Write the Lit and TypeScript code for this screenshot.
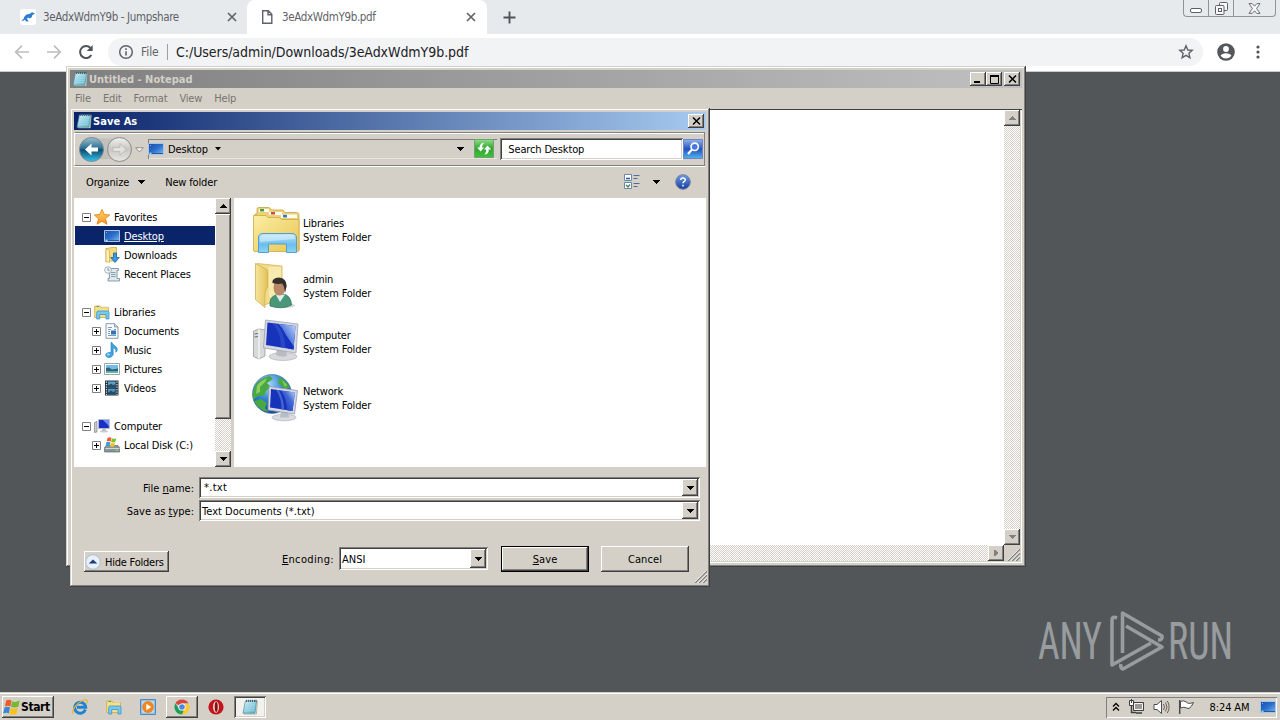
import { LitElement, html, svg, css, nothing, type TemplateResult } from "lit";
import { customElement, property } from "lit/decorators.js";
import { classMap } from "lit/directives/class-map.js";

interface TreeRow {
  label?: string;
  icon?: string;
  level?: number;
  toggle?: "plus" | "minus";
  selected?: boolean;
}

const TREE: TreeRow[] = [
  { label: "Favorites", icon: "star", level: 0, toggle: "minus" },
  { label: "Desktop", icon: "desktop", level: 1, selected: true },
  { label: "Downloads", icon: "downloads", level: 1 },
  { label: "Recent Places", icon: "recent", level: 1 },
  {},
  { label: "Libraries", icon: "libraries", level: 0, toggle: "minus" },
  { label: "Documents", icon: "document", level: 1, toggle: "plus" },
  { label: "Music", icon: "music", level: 1, toggle: "plus" },
  { label: "Pictures", icon: "pictures", level: 1, toggle: "plus" },
  { label: "Videos", icon: "videos", level: 1, toggle: "plus" },
  {},
  { label: "Computer", icon: "computer", level: 0, toggle: "minus" },
  { label: "Local Disk (C:)", icon: "disk", level: 1, toggle: "plus" },
];

const PLACES = [
  { label: "Libraries", icon: "librariesLarge" },
  { label: "admin", icon: "userLarge" },
  { label: "Computer", icon: "computerLarge" },
  { label: "Network", icon: "networkLarge" },
];

interface Icon {
  box: string;
  body: TemplateResult;
}

const ICONS: Record<string, Icon> = {
  notepad: {
    box: "0 0 16 16",
    body: svg`
      <defs><linearGradient id="np" x1="0" y1="0" x2="1" y2="1"><stop offset="0" stop-color="#d9f4f8"/><stop offset="1" stop-color="#52adc9"/></linearGradient></defs>
      <path d="M4 2H15.3L14.4 15H2Z" fill="#f4f6ef" stroke="#8a8a66" stroke-width=".6"/>
      <path d="M3.4 2H14.6L13 14.2H1Z" fill="url(#np)" stroke="#3c8299" stroke-width=".6"/>
      <path d="M4 5.5H13M3.7 7.5H12.7M3.4 9.5H12.5M3.1 11.5H12.2" stroke="#a3dae6" stroke-width=".7"/>
      <path d="M4.5 .8V3M6.5 .8V3M8.5 .8V3M10.5 .8V3M12.5 .8V3M14 .8V3" stroke="#3e5f69" stroke-width=".9"/>`,
  },
  desktop: {
    box: "0 0 16 16",
    body: svg`
      <defs><linearGradient id="dk" x1="0" y1="0" x2="1" y2="1"><stop offset="0" stop-color="#1a4ba5"/><stop offset=".5" stop-color="#2d6fce"/><stop offset="1" stop-color="#7fbbf0"/></linearGradient></defs>
      <path d="M.5 2.5H15.5V13.5H.5Z" fill="url(#dk)" stroke="#a9c6e5"/>
      <path d="M1 12.5H15" stroke="#2a5796" stroke-width="1"/>
      <path d="M2 4.500H3" stroke="#86b9ea"/>
      <path d="M1.5 12.300H3.500" stroke="#8fe6ef" stroke-width="1.400"/>`,
  },
  star: {
    box: "0 0 16 16",
    body: svg`
      <defs><linearGradient id="st" x1="0" y1="0" x2="0" y2="1"><stop offset="0" stop-color="#ffd873"/><stop offset="1" stop-color="#f7941d"/></linearGradient></defs>
      <path d="M8 .5L10.200 5.500 15.700 6 11.500 9.600 12.900 15.200 8 12.200 3.100 15.200 4.500 9.600 .3 6 5.800 5.500Z" fill="url(#st)" stroke="#e58314" stroke-width=".9"/>`,
  },
  downloads: {
    box: "0 0 16 16",
    body: svg`
      <path d="M2 1.5L8 .5H12.5V14H5L2 15Z" fill="#f4db7c" stroke="#c9a13b" stroke-width=".7"/>
      <path d="M2 1.5L5.5 3.5V15.5L2 14.5Z" fill="#fbefb2" stroke="#c9a13b" stroke-width=".6"/>
      <path d="M9.5 6H12.5V10.5H15.3L11 15.5 6.7 10.5H9.5Z" fill="#3b9ae0" stroke="#1a5fa8" stroke-width=".8"/>`,
  },
  recent: {
    box: "0 0 16 16",
    body: svg`
      <path d="M5 2.500H14.5V4.500H13V12.5H15.500V15H4V12.5H5.5Z" fill="#e1e9ee" stroke="#7890a0" stroke-width=".9"/>
      <path d="M7 6.5H11.5M7 8.5H11.5M7 10.5H11.5" stroke="#7d96a8" stroke-width=".9"/>
      <circle cx="4" cy="4" r="3.3" fill="#f2f6f8" stroke="#9aabb6" stroke-width=".9"/>
      <path d="M4 2V4.3H5.5" fill="none" stroke="#5c7485" stroke-width=".8"/>`,
  },
  libraries: {
    box: "0 0 16 16",
    body: svg`
      <path d="M.7 2H6L7 3.500H14.5V13.5H.7Z" fill="#f7df85" stroke="#cfa942" stroke-width=".8"/>
      <path d="M2.5 2.5H5" stroke="#4aab56"/><path d="M8 3H14" stroke="#e3e3d2"/>
      <path d="M2.7 15V8.5Q2.7 7 4.2 7H13.5Q15 7 15 8.5V15H12V10.5H5.7V15Z" fill="#79c8f0" stroke="#3995cd" stroke-width=".8"/>`,
  },
  document: {
    box: "0 0 16 16",
    body: svg`
      <path d="M2 .7H10.5L14 4V15.3H2Z" fill="#fdfefe" stroke="#7690a6" stroke-width=".9"/>
      <path d="M10.5 .7V4H14" fill="#c7d9e8" stroke="#7690a6" stroke-width=".8"/>
      <path d="M4 4.5H8M4 6.5H7M10 6.5H12M4 8.5H6M4 10.5H6M4 12.5H12" stroke="#7e9bb8"/>
      <path d="M7 7.5H12V11.5H7Z" fill="#2f74b8"/>`,
  },
  music: {
    box: "0 0 16 16",
    body: svg`
      <path d="M8 .5C8.5 3.5 13.5 4 13.3 7.500 13.2 9 12.2 10 11.7 10.2 12.5 7.5 11 6.5 9.2 5.8V12C9.2 14 7.2 15.5 4.8 15.5 3 15.5 1.700 14.400 1.700 13 1.700 11.200 4 10 7 10.500V.5Z" fill="#3fa4e3" stroke="#1e78bd" stroke-width=".6"/>
      <ellipse cx="4.3" cy="12.6" rx="1.6" ry="1" fill="#a5daf8"/>`,
  },
  pictures: {
    box: "0 0 16 16",
    body: svg`
      <path d="M.5 2.5H15.5V13.5H.5Z" fill="#fff" stroke="#98a5ac"/>
      <path d="M2 4H14V12H2Z" fill="#72bce8"/>
      <path d="M2 7L5 6.5 8 8.5 14 7.5V12H2Z" fill="#2c6478"/>
      <path d="M2 10.2H14V12H2Z" fill="#69b7ad"/>`,
  },
  videos: {
    box: "0 0 16 16",
    body: svg`
      <path d="M1 .5H14.5V15.5H1Z" fill="#27363e"/>
      <path d="M4 1.5H11.5V7.3H4Z" fill="#5ca2cb"/><path d="M4 8.7H11.5V14.5H4Z" fill="#4f94c4"/>
      <path d="M4 5.5L7 3.5 9 5 11.5 4V7.3H4ZM4 12.5L7 10.5 9 12 11.5 11V14.5H4Z" fill="#244d68"/>
      <path d="M2.5 1.5V15M13 1.5V15" stroke="#d9e5ea" stroke-width="1.2" stroke-dasharray="1.2 1.3"/>`,
  },
  computer: {
    box: "0 0 16 16",
    body: svg`
      <path d="M.5 4.5L3 3.5V14L.5 14.5Z" fill="#c9ccd1" stroke="#7e838b" stroke-width=".7"/>
      <path d="M4.5 1.5H15.3V10.5H4.5Z" fill="#1a2fc8" stroke="#b9bfca" stroke-width=".9"/>
      <path d="M9 2L15 2V8Z" fill="#6e8ff0"/>
      <path d="M8.5 11H11.5L12.5 13.5H7.5Z" fill="#b4b8c2"/><ellipse cx="10" cy="13.6" rx="4" ry="1" fill="#c9cbd1"/>`,
  },
  disk: {
    box: "0 0 16 16",
    body: svg`
      <path d="M.500 10.5L2.500 8.5H14L15.7 11V15H.500Z" fill="#87949a" stroke="#5d6a70" stroke-width=".7"/>
      <path d="M1.3 11.5H15.4" stroke="#cfd8dc"/><path d="M11.5 13.300H14" stroke="#7fe25c" stroke-width="1.1"/>
      <path d="M3.5 1Q5.5 -.2 7.5 .8L6.7 4.500Q4.8 3.6 2.6 4.600Z" fill="#ef5d26"/>
      <path d="M8 1.2Q9.900 2.200 12.200 1.200L11.300 5Q9.200 5.900 7.100 5Z" fill="#7cbf33"/>
      <path d="M2.400 5.300Q4.500 4.300 6.400 5.300L5.500 9.200Q3.700 8.200 1.500 9.200Z" fill="#3f9cdc"/>
      <path d="M6.900 5.700Q9 6.600 11.100 5.700L10.200 9.400Q8.100 10.200 6 9.400Z" fill="#fbc021"/>`,
  },
  librariesLarge: {
    box: "0 0 48 48",
    body: svg`
      <defs>
        <linearGradient id="lf" x1="0" y1="0" x2="1" y2="1"><stop offset="0" stop-color="#fbeea6"/><stop offset="1" stop-color="#e9c550"/></linearGradient>
        <linearGradient id="lb" x1="0" y1="0" x2="0" y2="1"><stop offset="0" stop-color="#bfe6fa"/><stop offset=".6" stop-color="#6bbdec"/><stop offset="1" stop-color="#8ed8f5"/></linearGradient>
      </defs>
      <path d="M5 8V3Q5 1.500 6.5 1.500H17L20 4H31L33 6.5H44Q47 6.500 47 9V44H3V8Z" fill="#ecd37a" stroke="#c8a547" stroke-width=".8"/>
      <path d="M7 3H17V6H7ZM17 6H30V9H17ZM29 8.5H45V12H29Z" fill="#fffef5"/>
      <path d="M8 3H12V5.5H8Z" fill="#4a9b42"/><path d="M19 6H23V8.5H19Z" fill="#cf4c38"/><path d="M31 8.8H35V11.5H31Z" fill="#3a7ab8"/>
      <path d="M1.5 9.500H14L16 11.500H27L30 13.5H47V44Q47 45.5 45.5 45.5H3Q1.5 45.5 1.5 44Z" fill="url(#lf)" stroke="#cda941" stroke-width=".8"/>
      <path d="M6.5 46.5V32Q6.5 27.5 11 27.5H40Q44.5 27.5 44.5 32V46.5H34.5V38H16.5V46.5Z" fill="url(#lb)" stroke="#529fd0" stroke-width="1"/>
      <path d="M8 33Q8 29 12 29H39Q43 29 43 33L8 36Z" fill="#ddf3fd" opacity=".55"/>`,
  },
  userLarge: {
    box: "0 0 48 48",
    body: svg`
      <defs><linearGradient id="uf" x1="0" y1="0" x2="1" y2="0"><stop offset="0" stop-color="#f7e59c"/><stop offset="1" stop-color="#e4c25a"/></linearGradient></defs>
      <path d="M5 1.500L30 4V37L12 43Z" fill="#f1dc8b" stroke="#d6b85b" stroke-width=".8"/>
      <path d="M17 5H29V35H17Z" fill="#faf0bd" opacity=".7"/>
      <path d="M3.5 1.5L14 7Q15.5 8 15.5 9.500V25Q12 28 13 45.5L3.5 37.5Z" fill="url(#uf)" stroke="#d0af50" stroke-width=".8"/>
      <ellipse cx="34" cy="43.5" rx="9" ry="2.5" fill="#d6d6d6"/>
      <path d="M18 44Q17 35 24 33L33 32.5Q39 34.5 39.5 43Q30 48 18 44Z" fill="#489779" stroke="#32745b" stroke-width=".8"/>
      <path d="M24 33L28 40 33 32.5Z" fill="#dcefe6"/>
      <ellipse cx="27.500" cy="25.500" rx="6" ry="8" fill="#b98866"/>
      <path d="M20.5 21Q19.5 16 27 15.5 34.5 16 34.7 24L33 31Q32.500 24 30 21.500Q26 22.5 20.5 21Z" fill="#352f2c"/>`,
  },
  computerLarge: {
    box: "0 0 48 48",
    body: svg`
      <defs><linearGradient id="cs" x1="0" y1="1" x2="1" y2="0"><stop offset="0" stop-color="#1932b5"/><stop offset=".5" stop-color="#1430bf"/><stop offset=".52" stop-color="#547bdd"/><stop offset="1" stop-color="#c1d9fb"/></linearGradient></defs>
      <path d="M1.5 13L7 11 13 12V38L7 41 1.5 38.5Z" fill="#d8d9d9" stroke="#989a9c" stroke-width=".8"/>
      <path d="M7 11L7 41" stroke="#f7f7f7" stroke-width="1.2"/><path d="M2.5 16L6 15.5M2.5 19L6 18.5" stroke="#6b6e73" stroke-width="1.2"/>
      <ellipse cx="31" cy="38.5" rx="14" ry="4" fill="#d7d9dc" stroke="#b3b6ba" stroke-width=".7"/>
      <path d="M25 30L34 32 35 38Q29 40 24 37Z" fill="#b8bbc2"/>
      <path d="M13.500 2L46 6 44 35 11.500 30Z" fill="#d4d7e1" stroke="#9fa4b4" stroke-width=".8"/>
      <path d="M15.5 4.5L43.500 8 41.500 31.5 14 27Z" fill="#1732bb"/>
      <path d="M26 5.800L43.500 8 41.500 31.500 36 30.600Q36 14 26 5.800Z" fill="url(#cs)"/>
      <path d="M20 5L25 5.7Q33 16 33.500 30.200L29 29.500Q29 14 20 5Z" fill="#3152cc" opacity=".7"/>`,
  },
  networkLarge: {
    box: "0 0 48 48",
    body: svg`
      <defs>
        <radialGradient id="gl" cx=".4" cy=".25" r=".8"><stop offset="0" stop-color="#a9dcfb"/><stop offset=".5" stop-color="#2f7fd0"/><stop offset="1" stop-color="#123f8f"/></radialGradient>
        <linearGradient id="gs" x1="0" y1="1" x2="1" y2="0"><stop offset="0" stop-color="#1233bd"/><stop offset=".6" stop-color="#4067d6"/><stop offset="1" stop-color="#c6dbf9"/></linearGradient>
      </defs>
      <circle cx="20" cy="20" r="19.5" fill="url(#gl)" stroke="#3e74ab" stroke-width=".6"/>
      <path d="M4 10Q10 3 18 2L21 5 15 9 19 13 14 17 12 22 6 22 1.5 26Q-1 18 4 10ZM2 27L9 25 15 29 13 34 17 38Q8 38 2 27ZM27 3Q35 6 38 14L32 15 29 11 26 10Z" fill="#48a943"/>
      <path d="M5 12Q8 7 15 4L13 8 8 13 8 18 4 20ZM30 6L35 11 33 13Z" fill="#a3d768" opacity=".8"/>
      <ellipse cx="32" cy="43.500" rx="12" ry="3.3" fill="#d8dadd" stroke="#aeb2b8" stroke-width=".7"/>
      <path d="M29 37L36 38 37 43.500H28Z" fill="#b9bdc6"/>
      <path d="M17 12.500L45.5 16.500 42.5 40 16 36Z" fill="#d5d9e4" stroke="#949bb0" stroke-width=".8"/>
      <path d="M19 15L43 18.5 40.5 37 18 33.5Z" fill="#1733ba"/>
      <path d="M29 16.5L43 18.5 40.5 37 35 36.2Q35 25 29 16.5Z" fill="url(#gs)"/>
      <path d="M24 15.8L27 16.2Q32 25 32 35.7L29.5 35.3Q30 25 24 15.8Z" fill="#4565d3"/>`,
  },
  ie: {
    box: "0 0 16 16",
    body: svg`
      <path d="M13.4 10.6A5.500 5.500 0 1 1 13.7 8.3H5" fill="none" stroke="#1f83d2" stroke-width="2.9"/>
      <path d="M1.5 14.7C-1.5 12 5 3.5 11 1.2 14.5 0 16 1.6 14.8 4.5" fill="none" stroke="#eab32f" stroke-width="1.2"/>`,
  },
  player: {
    box: "0 0 16 16",
    body: svg`
      <path d="M.5 .5H15.5V15.5H.5Z" fill="#8fc3ee" stroke="#4a8bc4"/>
      <path d="M2.5 2.5H13.5V13.5H2.5Z" fill="#d5e9f8"/>
      <circle cx="8" cy="8" r="5.9" fill="#f0871d"/><path d="M6.3 4.8L11.3 8 6.3 11.2Z" fill="#fff"/>`,
  },
  chrome: {
    box: "0 0 16 16",
    body: svg`
      <path d="M8 8L1.5 4.25A7.5 7.5 0 0 1 14.5 4.25H8Z" fill="#db4437"/>
      <path d="M8 8L14.5 4.25A7.5 7.5 0 0 1 8 15.5L11.3 9.8Z" fill="#fbcb2d"/>
      <path d="M8 8L8 15.5A7.5 7.5 0 0 1 1.5 4.25L5 10Z" fill="#1a9e58"/>
      <path d="M4.8 10L8 15.5 11.3 9.8Z" fill="#fbcb2d"/><path d="M4.8 10L8 15.5 9.5 12Z" fill="#1a9e58"/>
      <circle cx="8" cy="8" r="3.6" fill="#fff"/><circle cx="8" cy="8" r="2.8" fill="#4a86e8"/>`,
  },
  opera: {
    box: "0 0 16 16",
    body: svg`<circle cx="8" cy="8" r="7.6" fill="#c3141c"/><ellipse cx="8" cy="8" rx="3" ry="5.8" fill="#e3d9d3"/><ellipse cx="8.2" cy="8" rx="1.500" ry="4.9" fill="#8f0b12"/>`,
  },
  flagWin: {
    box: "0 0 16 16",
    body: svg`
      <path d="M3 1.5Q5.6 0 8 1.500L6.9 7Q4.5 5.7 1.8 7Z" fill="#ef5a26"/>
      <path d="M8.6 2.100Q11.2 3.600 15.7 1.500L14.400 7.300Q10.5 8.800 7.5 7.4Z" fill="#76b82f"/>
      <path d="M1.5 8Q4.2 6.7 6.6 8L5.500 13.500Q3.2 12.200 .2 13.500Z" fill="#3a86d4"/>
      <path d="M7.2 8.4Q10.2 9.700 14 8.400L12.700 14.100Q9 15.600 6.1 14.100Z" fill="#fbc11c"/>`,
  },
  refresh: {
    box: "0 0 20 20",
    body: svg`
      <defs><linearGradient id="rf" x1="0" y1="0" x2="0" y2="1"><stop offset="0" stop-color="#8fdc86"/><stop offset=".5" stop-color="#2fa62f"/><stop offset="1" stop-color="#40c13c"/></linearGradient></defs>
      <path d="M.5 .5H19.5V18.5H.5Z" fill="url(#rf)" stroke="#71a271"/>
      <path d="M10 4Q6 3.500 5.500 8.500H3L6.700 12.500 10.2 8.500H8Q8 5.500 10 4Z" fill="#fff"/>
      <path d="M10.500 15.500Q14.700 15.500 14.8 10.500H17.300L13.500 6.500 9.900 10.5H12.300Q12.300 13.500 10.500 15.500Z" fill="#fff"/>`,
  },
  search: {
    box: "0 0 20 20",
    body: svg`
      <defs><linearGradient id="sr" x1="0" y1="0" x2="0" y2="1"><stop offset="0" stop-color="#93b4ec"/><stop offset=".5" stop-color="#2450be"/><stop offset="1" stop-color="#52b6ee"/></linearGradient></defs>
      <path d="M.5 .5H19.5V19.5H.5Z" fill="url(#sr)" stroke="#6a86c4"/>
      <circle cx="11.7" cy="7.8" r="3.7" fill="#4c78dc" stroke="#fff" stroke-width="1.6"/><path d="M9 10.5L5 15" stroke="#fff" stroke-width="2.2"/>`,
  },
  view: {
    box: "0 0 16 16",
    body: svg`
      <path d="M.5 .5H7.5V6.5H.5ZM.5 8.5H7.5V14.5H.5Z" fill="#fff" stroke="#6d87a6"/>
      <path d="M2 4.5H6" stroke="#2b5fa8" stroke-width="1.6"/><path d="M2 11L4 13 6 10.5" fill="none" stroke="#4c8544" stroke-width="1.4"/>
      <path d="M9.5 1.5H15.5M9.5 4.5H13.5M9.5 9.5H15.5M9.5 12.5H13.5" stroke="#4c6da0"/>`,
  },
};

const icon = (name: string, size = 16): TemplateResult => html`
  <svg class="icon" width=${size} height=${size} viewBox=${ICONS[name].box}>${ICONS[name].body}</svg>
`;

const arrow = (dir: "up" | "down" | "right", color = "#000"): TemplateResult => {
  const d = { up: "M0 5H8L4 1Z", down: "M0 1H8L4 5Z", right: "M2 -1V7L6 3Z" }[dir];
  return html`<svg class="arrow" width="8" height="6" viewBox="0 0 8 6" shape-rendering="crispEdges"><path d=${d} fill=${color} /></svg>`;
};

const grip = html`
  <svg width="12" height="12" viewBox="0 0 12 12">
    <path d="M0 12L12 0M4 12L12 4M8 12L12 8" stroke="#808080" stroke-width="1.500" />
    <path d="M-1.200 12L12 -1.200M2.800 12L12 2.800M6.800 12L12 6.800" stroke="#fff" stroke-width=".8" />
  </svg>
`;

const closeGlyph = html`
  <svg width="9" height="8" viewBox="0 0 9 8"><path d="M1 .5L8 7.500M8 .5L1 7.500" stroke="#000" stroke-width="1.500" /></svg>
`;

const shared = css`
  * {
    box-sizing: border-box;
  }

  svg {
    display: block;
    flex: none;
  }

  .raised {
    background: #d4d0c8;
    box-shadow:
      inset -1px -1px #404040,
      inset 1px 1px #fff,
      inset -2px -2px #808080;
  }

  .sunken {
    background: #fff;
    box-shadow:
      inset 1px 1px #808080,
      inset -1px -1px #fff,
      inset 2px 2px #404040,
      inset -2px -2px #d4d0c8;
  }

  .checker {
    background: repeating-conic-gradient(#fff 0 25%, #d4d0c8 0 50%) 0 0 / 2px 2px;
  }

  .square {
    display: flex;
    flex: none;
    align-items: center;
    justify-content: center;
    width: 16px;
    height: 16px;
  }

  .grow {
    flex: 1;
  }
`;

@customElement("win-browser")
export class WinBrowser extends LitElement {
  static styles = [
    shared,
    css`
      :host {
        display: block;
        box-sizing: border-box;
        height: 72px;
        color: #5f6368;
        background: #fff;
        border-bottom: 1px solid #c8cacc;
      }

      .tabs {
        display: flex;
        height: 34px;
        background: #e7eaed;
      }

      .tab {
        display: flex;
        align-items: center;
        width: 247px;
        padding: 0 10px 0 20px;
        font-size: 11.5px;
        letter-spacing: -0.36px;
      }

      .tab.active {
        width: 240px;
        padding: 0 11px 0 14px;
        background: #fff;
        border-radius: 8px 8px 0 0;
      }

      .tab .title {
        flex: 1;
        margin-left: 7px;
        white-space: nowrap;
      }

      .tab.active .title {
        margin-left: 9px;
      }

      .plus {
        margin: 11px 0 0 16px;
      }

      .controls {
        display: flex;
        width: 93px;
        height: 17px;
        margin-right: 4px;
        border: 1px solid #90949a;
        border-top: 0;
        border-radius: 0 0 4px 4px;
      }

      .controls div {
        display: flex;
        flex: 25;
        align-items: center;
        justify-content: center;
        border-right: 1px solid #90949a;
      }

      .controls div:last-child {
        flex: 42;
        border-right: 0;
      }

      .toolbar {
        display: flex;
        align-items: center;
        height: 36px;
        padding: 0 20px 0 14px;
      }

      .nav {
        display: flex;
        gap: 16px;
        width: 94px;
      }

      .omnibox {
        display: flex;
        flex: 1;
        align-items: center;
        height: 28px;
        padding: 0 9px 0 10px;
        background: #f1f3f4;
        border-radius: 14px;
      }

      .scheme {
        width: 26px;
        margin-left: 7px;
        font-size: 12px;
        letter-spacing: -0.1px;
      }

      .divider {
        width: 1px;
        height: 16px;
        margin-right: 8px;
        background: #9aa0a6;
      }

      .url {
        flex: 1;
        color: #202124;
        font-size: 14px;
        letter-spacing: -0.05px;
      }

      .profile {
        margin: 0 21px 0 14px;
      }
    `,
  ];

  render(): TemplateResult {
    const x = html`<svg width="10" height="10" viewBox="0 0 10 10"><path d="M1 1L9 9M9 1L1 9" stroke="#5f6368" stroke-width="1.700" /></svg>`;
    return html`
      <div class="tabs">
        <div class="tab">
          <svg width="16" height="16" viewBox="0 0 16 16">
            <rect width="16" height="16" rx="3" fill="#fff" />
            <path d="M1.500 11.500Q4 10.500 4.500 7.500 6 4.500 9.500 5L12 3.200 15 4.500 12.500 6 11.500 8.500 9.500 9.500 8 8.500 7 9.500 8.500 12.500H6L5 10.500Q3.500 12.500 1.500 11.500Z" fill="#2b7fd0" />
          </svg>
          <span class="title">3eAdxWdmY9b - Jumpshare</span>
          ${x}
        </div>
        <div class="tab active">
          <svg width="12" height="14" viewBox="0 0 12 14">
            <path d="M1.700 .8H7.300L10.800 4.300V13.200H1.700ZM7 1V4.700H10.800" fill="none" stroke="#5f6368" stroke-width="1.400" />
          </svg>
          <span class="title">3eAdxWdmY9b.pdf</span>
          ${x}
        </div>
        <svg class="plus" width="13" height="13" viewBox="0 0 13 13"><path d="M6.500 .5V12.500M.5 6.500H12.500" stroke="#50545a" stroke-width="1.900" /></svg>
        <span class="grow"></span>
        <div class="controls">
          <div><svg width="12" height="12" viewBox="0 0 12 12"><rect x=".5" y="6.500" width="11" height="4" rx="1.500" fill="#fff" stroke="#5a5f68" /></svg></div>
          <div>
            <svg width="13" height="13" viewBox="0 0 13 13">
              <g fill="#f7f8f9" stroke="#5a5f68"><rect x="4.500" y=".5" width="8" height="8" rx="1" /><rect x=".5" y="3.500" width="8.500" height="9" rx="1" /><rect x="3.500" y="6.500" width="3" height="3" /></g>
            </svg>
          </div>
          <div>
            <svg width="13" height="11" viewBox="0 0 13 11">
              <path d="M1 .6H4.200L6.500 3.200 8.800 .6H12L8.600 5.500 12 10.400H8.800L6.500 7.800 4.200 10.400H1L4.400 5.500Z" fill="#fafafa" stroke="#5a5f68" stroke-width=".9" />
            </svg>
          </div>
        </div>
      </div>
      <div class="toolbar">
        <div class="nav">
          <svg width="16" height="16" viewBox="0 0 16 16"><path d="M15 8H2M8 1.700L1.700 8 8 14.300" fill="none" stroke="#bbbdc0" stroke-width="1.700" /></svg>
          <svg width="16" height="16" viewBox="0 0 16 16"><path d="M1 8H14M8 1.700L14.300 8 8 14.300" fill="none" stroke="#bbbdc0" stroke-width="1.700" /></svg>
          <svg width="16" height="16" viewBox="0 0 16 16"><path d="M13.300 11A6 6 0 1 1 12.500 4" fill="none" stroke="#50545a" stroke-width="2" /><path d="M14.700 1V7H8.700Z" fill="#50545a" /></svg>
        </div>
        <div class="omnibox">
          <svg width="16" height="16" viewBox="0 0 16 16"><circle cx="8" cy="8" r="6.300" fill="none" stroke="#5f6368" stroke-width="1.500" /><path d="M8 7.200V11.500M8 4.300V5.900" stroke="#5f6368" stroke-width="1.600" /></svg>
          <span class="scheme">File</span>
          <span class="divider"></span>
          <span class="url">C:/Users/admin/Downloads/3eAdxWdmY9b.pdf</span>
          <svg width="16" height="16" viewBox="0 0 16 16"><path d="M8 1.800L9.800 6 14.200 6.400 10.900 9.300 11.900 13.700 8 11.400 4.100 13.700 5.100 9.300 1.800 6.400 6.200 6Z" fill="none" stroke="#5f6368" stroke-width="1.400" /></svg>
        </div>
        <svg class="profile" width="18" height="18" viewBox="0 0 18 18">
          <circle cx="9" cy="9" r="8.800" fill="#54585d" />
          <circle cx="9" cy="6" r="2.900" fill="#fff" />
          <path d="M3.500 12.800Q5 10.300 9 10.300T14.500 12.800Q12.500 15.500 9 15.500T3.500 12.800Z" fill="#fff" />
        </svg>
        <svg width="4" height="14" viewBox="0 0 4 14"><g fill="#50545a"><circle cx="2" cy="2" r="1.600" /><circle cx="2" cy="7" r="1.600" /><circle cx="2" cy="12" r="1.600" /></g></svg>
      </div>
    `;
  }
}

@customElement("win-notepad")
export class WinNotepad extends LitElement {
  static styles = [
    shared,
    css`
      :host {
        display: flex;
        flex-direction: column;
        box-sizing: border-box;
        padding: 4px;
        background: #d4d0c8;
        box-shadow:
          inset -1px -1px #404040,
          inset 1px 1px #d4d0c8,
          inset -2px -2px #808080,
          inset 2px 2px #fff;
      }

      .titlebar {
        display: flex;
        flex: none;
        align-items: center;
        height: 18px;
        padding: 0 2px;
        color: #d4d0c8;
        background: linear-gradient(90deg, #808080, #c0c0c0);
      }

      .title {
        flex: 1;
        margin-left: 1px;
        font-size: 11px;
        font-weight: bold;
        letter-spacing: 0;
      }

      .titlebar .square {
        height: 14px;
      }

      .titlebar .square:last-child {
        margin-left: 2px;
      }

      .menu {
        display: flex;
        flex: none;
        gap: 12px;
        align-items: center;
        height: 21px;
        padding: 0 5px;
        color: #77746f;
      }

      .edit {
        display: grid;
        flex: 1;
        grid-template-rows: 1fr 16px;
        grid-template-columns: 1fr 16px;
        padding: 1px 2px 2px;
        box-shadow:
          inset 0 1px #404040,
          inset -1px -1px #fff;
      }

      .text {
        background: #fff;
      }

      .vbar,
      .hbar {
        display: flex;
        justify-content: space-between;
      }

      .vbar {
        flex-direction: column;
      }

      .hbar {
        justify-content: flex-end;
      }

      .corner {
        display: flex;
        align-items: flex-end;
        justify-content: flex-end;
      }
    `,
  ];

  render(): TemplateResult {
    return html`
      <div class="titlebar">
        ${icon("notepad")}
        <span class="title">Untitled - Notepad</span>
        <div class="square raised"><svg width="8" height="8" viewBox="0 0 8 8"><path d="M0 7H6" stroke="#000" stroke-width="2" /></svg></div>
        <div class="square raised"><svg width="9" height="9" viewBox="0 0 9 9"><path d="M.5 0V8.500H8.500V0" fill="none" stroke="#000" /><path d="M0 1H9" stroke="#000" stroke-width="2" /></svg></div>
        <div class="square raised">${closeGlyph}</div>
      </div>
      <div class="menu">
        <span>File</span><span>Edit</span><span>Format</span><span>View</span><span>Help</span>
      </div>
      <div class="edit">
        <div class="text"></div>
        <div class="vbar checker">
          <div class="square raised">${arrow("up", "#808080")}</div>
          <div class="square raised">${arrow("down", "#808080")}</div>
        </div>
        <div class="hbar checker"><div class="square raised">${arrow("right", "#808080")}</div></div>
        <div class="corner">${grip}</div>
      </div>
    `;
  }
}

@customElement("win-combo")
export class WinCombo extends LitElement {
  @property({ type: String })
  value = "";

  @property({ type: Boolean, reflect: true })
  editable = false;

  static styles = [
    shared,
    css`
      :host {
        display: flex;
        box-sizing: border-box;
        padding: 2px;
        background: #fff;
        box-shadow:
          inset 1px 1px #808080,
          inset -1px -1px #fff,
          inset 2px 2px #404040,
          inset -2px -2px #d4d0c8;
      }

      .value {
        flex: 1;
        align-self: center;
        padding: 1px 0 0 1px;
        letter-spacing: 0.03px;
      }

      :host([editable]) .value {
        padding: 0 0 0 3px;
        letter-spacing: 0.3px;
      }

      .square {
        height: auto;
      }
    `,
  ];

  render(): TemplateResult {
    return html`
      <span class="value">${this.value}</span>
      <div class="square raised">${arrow("down")}</div>
    `;
  }
}

@customElement("win-save-dialog")
export class WinSaveDialog extends LitElement {
  static styles = [
    shared,
    css`
      :host {
        display: flex;
        flex-direction: column;
        box-sizing: border-box;
        padding: 4px 4px 3px 4px;
        background: #d4d0c8;
        box-shadow:
          inset -1px -1px #404040,
          inset 1px 1px #d4d0c8,
          inset -2px -2px #808080,
          inset 2px 2px #fff;
      }

      .titlebar {
        display: flex;
        flex: none;
        align-items: center;
        height: 18px;
        padding: 0 2px;
        color: #fff;
        background: linear-gradient(90deg, #0a246a, #a6caf0);
      }

      .title {
        flex: 1;
        margin-left: 1px;
        font-size: 11px;
        font-weight: bold;
        letter-spacing: 0.05px;
      }

      .titlebar .square {
        height: 14px;
      }

      .navbar {
        display: flex;
        flex: none;
        align-items: center;
        height: 34px;
        margin: 2px 1px 0 0;
        padding: 0 1px 0 4px;
        border: 1px solid #808080;
        border-left-color: #fff;
        box-shadow:
          0 1px #fff,
          inset 0 1px #fff;
      }

      .drop {
        margin: 2px 4px 0 2px;
      }

      .address {
        display: flex;
        align-items: center;
        width: 350px;
        height: 20px;
        box-shadow:
          inset 1px 1px #808080,
          inset 0 -1px #e9e6e0;
      }

      .address .crumb {
        margin: 0 7px 0 4px;
      }

      .address .refresh {
        margin: 0 3px 0 10px;
      }

      .search {
        width: 183px;
        height: 22px;
        margin: 0 0 0 3px;
        padding-left: 8px;
        line-height: 23px;
      }

      .commands {
        display: flex;
        flex: none;
        align-items: center;
        height: 32px;
        padding: 0 15px 0 12px;
      }

      .commands .organize {
        margin-right: 8px;
      }

      .commands .new {
        margin-left: 20px;
      }

      .commands .more {
        margin: 0 15px 0 12px;
      }

      .browser {
        display: flex;
        flex: none;
        height: 269px;
        background: #fff;
      }

      .tree {
        width: 141px;
        padding-top: 9px;
      }

      .row {
        display: flex;
        align-items: center;
        height: 19px;
        padding-left: 8px;
        white-space: nowrap;
      }

      .row.child {
        padding-left: 18px;
      }

      .row.selected {
        margin-left: 1px;
        padding-left: 17px;
        color: #fff;
        text-decoration: underline;
        background: #0a246a;
      }

      .toggle {
        width: 9px;
        margin: 2px 3px 0 0;
      }

      .row span {
        margin-left: 4px;
        padding-top: 2px;
      }

      .scroll {
        display: flex;
        flex-direction: column;
        justify-content: space-between;
        width: 16px;
      }

      .thumb {
        height: 205px;
        margin-bottom: auto;
      }

      .splitter {
        width: 3px;
        background: #d4d0c8;
      }

      .places {
        padding: 4px 18px;
      }

      .place {
        display: flex;
        gap: 3px;
        align-items: center;
        height: 56px;
        line-height: 14px;
      }

      .place div {
        padding-top: 2px;
        letter-spacing: -0.2px;
      }

      .fields {
        display: grid;
        grid-template-rows: 21px 21px;
        grid-template-columns: 120px 501px;
        row-gap: 2px;
        column-gap: 5px;
        align-items: stretch;
        padding-top: 10px;
        letter-spacing: 0;
        line-height: 23px;
        text-align: right;
      }

      .fields win-combo {
        line-height: 15px;
        text-align: left;
      }

      .actions {
        display: flex;
        flex: 1;
        align-items: flex-start;
        padding: 25px 17px 0 10px;
      }

      .hide {
        display: flex;
        gap: 4px;
        align-items: center;
        width: 85px;
        height: 21px;
        margin: 5px 0 0;
        padding-left: 1px;
        white-space: nowrap;
      }

      .hide span {
        padding-top: 1px;
        letter-spacing: -0.22px;
      }

      .encoding {
        margin: 7px 5px 0 0;
        letter-spacing: 0.35px;
      }

      .encoding-box {
        width: 149px;
        height: 23px;
        margin: 1px 13px 0 0;
      }

      .button {
        display: flex;
        align-items: center;
        justify-content: center;
        width: 88px;
        height: 26px;
        letter-spacing: 0.1px;
      }

      .button.default {
        margin-right: 12px;
        border: 1px solid #000;
      }

      .size {
        align-self: flex-end;
        margin: -13px -1px 1px;
      }
    `,
  ];

  private renderRow(row: TreeRow): TemplateResult {
    if (!row.label || !row.icon) return html`<div class="row"></div>`;
    const toggle = row.toggle
      ? svg`<path d="M.5 .5H8.5V8.5H.5Z" fill="#fff" stroke="#808080"/><path d=${row.toggle === "plus" ? "M2 4.5H7M4.5 2V7" : "M2 4.5H7"} stroke="#000"/>`
      : nothing;
    return html`
      <div class=${classMap({ row: true, child: row.level === 1, selected: !!row.selected })}>
        <svg class="toggle" width="9" height="9" viewBox="0 0 9 9">${toggle}</svg>
        ${icon(row.icon)}
        <span>${row.label}</span>
      </div>
    `;
  }

  private renderNav(): TemplateResult {
    return html`
      <div class="navbar">
        <svg width="54" height="28" viewBox="0 0 54 28">
          <defs>
            <linearGradient id="back" x1="0" y1="0" x2="0" y2="1"><stop offset="0" stop-color="#9fc0cf" /><stop offset=".45" stop-color="#2a6f94" /><stop offset=".52" stop-color="#0f4c70" /><stop offset="1" stop-color="#35c6f2" /></linearGradient>
            <linearGradient id="fwd" x1="0" y1="0" x2="0" y2="1"><stop offset="0" stop-color="#f1f1ef" /><stop offset=".5" stop-color="#c8c6c2" /><stop offset="1" stop-color="#eae8e4" /></linearGradient>
          </defs>
          <path d="M12 2Q27 5 42 2V26Q27 22 12 26Z" fill="#c2c0bb" />
          <circle cx="12.500" cy="14.500" r="12" fill="url(#back)" stroke="#7a8a92" />
          <path d="M12.500 8.500L6 14.500 12.500 20.500V16.500H19V12.500H12.500Z" fill="#fff" />
          <circle cx="40.500" cy="14.500" r="12" fill="url(#fwd)" stroke="#8b8a87" />
          <path d="M41 8.500L47 14.500 41 20.500V16.500H34V12.500H41Z" fill="#e3e1dd" stroke="#b5b3af" stroke-width=".7" />
        </svg>
        <svg class="drop" width="9" height="6" viewBox="0 0 9 6"><path d="M.7 .7H8.300L4.500 5Z" fill="#f5f4f2" stroke="#8b8984" stroke-width=".9" /></svg>
        <div class="address">
          ${icon("desktop")}
          <span class="crumb">Desktop</span>
          <svg width="6" height="4" viewBox="0 0 6 4"><path d="M0 0H6L3 3.500Z" /></svg>
          <span class="grow"></span>
          ${arrow("down")}
          <span class="refresh">${icon("refresh", 20)}</span>
        </div>
        <div class="search sunken">Search Desktop</div>
        ${icon("search", 20)}
      </div>
    `;
  }

  render(): TemplateResult {
    return html`
      <div class="titlebar">
        ${icon("notepad")}
        <span class="title">Save As</span>
        <div class="square raised">${closeGlyph}</div>
      </div>
      ${this.renderNav()}
      <div class="commands">
        <span class="organize">Organize</span>${arrow("down")}
        <span class="new">New folder</span>
        <span class="grow"></span>
        ${icon("view")}
        <span class="more">${arrow("down")}</span>
        <svg width="16" height="16" viewBox="0 0 16 16">
          <defs><linearGradient id="help" x1="0" y1="0" x2="0" y2="1"><stop offset="0" stop-color="#6f9be8" /><stop offset="1" stop-color="#163c9d" /></linearGradient></defs>
          <circle cx="8" cy="8" r="7.300" fill="url(#help)" stroke="#6d7f9e" />
          <path d="M5.700 6Q5.800 3.900 8 3.900T10.300 6Q10.200 7.100 9 7.700 8 8.200 8 9.300M8 10.800V12.400" fill="none" stroke="#fff" stroke-width="1.500" />
        </svg>
      </div>
      <div class="browser">
        <div class="tree">${TREE.map((row) => this.renderRow(row))}</div>
        <div class="scroll checker">
          <div class="square raised">${arrow("up")}</div>
          <div class="thumb raised"></div>
          <div class="square raised">${arrow("down")}</div>
        </div>
        <div class="splitter"></div>
        <div class="places">
          ${PLACES.map((p) => html`<div class="place">${icon(p.icon, 48)}<div>${p.label}<br />System Folder</div></div>`)}
        </div>
      </div>
      <div class="fields">
        <span>File <u>n</u>ame:</span><win-combo editable value="*.txt"></win-combo>
        <span>Save as <u>t</u>ype:</span><win-combo value="Text Documents (*.txt)"></win-combo>
      </div>
      <div class="actions">
        <div class="hide raised">
          <svg width="16" height="16" viewBox="0 0 16 16"><circle cx="8" cy="8" r="7.300" fill="#e9f0f8" stroke="#a9bdd4" /><path d="M3.700 9.500L8 5.500 12.300 9.500Z" fill="#1b3b7c" /></svg>
          <span>Hide Folders</span>
        </div>
        <span class="grow"></span>
        <span class="encoding"><u>E</u>ncoding:</span>
        <win-combo class="encoding-box" value="ANSI"></win-combo>
        <div class="button default raised"><span><u>S</u>ave</span></div>
        <div class="button raised">Cancel</div>
      </div>
      <div class="size">${grip}</div>
    `;
  }
}

@customElement("win-taskbar")
export class WinTaskbar extends LitElement {
  static styles = [
    shared,
    css`
      :host {
        display: flex;
        box-sizing: border-box;
        align-items: center;
        height: 28px;
        padding: 2px 3px 0 2px;
        background: #d4d0c8;
        box-shadow: inset 0 1px #d4d0c8, inset 0 2px #fff;
      }

      .start {
        display: flex;
        gap: 1px;
        align-items: center;
        width: 52px;
        height: 22px;
        padding-left: 1px;
        font-size: 12px;
        font-weight: bold;
        letter-spacing: -0.4px;
      }

      .quick {
        display: flex;
        flex: 1;
        align-items: center;
        margin-left: 8px;
      }

      .slot {
        display: flex;
        align-items: center;
        justify-content: center;
        width: 32px;
        height: 22px;
        margin-left: 2px;
      }

      .slot.open {
        background: #f3f1ed;
      }

      .tray {
        display: flex;
        align-items: center;
        width: 171px;
        height: 21px;
        padding: 0 1px 0 6px;
        box-shadow:
          inset 1px 1px #808080,
          inset -1px -1px #fff;
      }

      .tray svg + svg {
        margin-left: 8px;
      }

      .clock {
        flex: 1;
        padding-left: 4px;
        text-align: center;
        letter-spacing: -0.1px;
      }
    `,
  ];

  render(): TemplateResult {
    return html`
      <div class="start raised">${icon("flagWin", 17)}<span>Start</span></div>
      <div class="quick">
        <div class="slot">${icon("ie")}</div>
        <div class="slot">${icon("libraries")}</div>
        <div class="slot">${icon("player")}</div>
        <div class="slot raised">${icon("chrome")}</div>
        <div class="slot">${icon("opera")}</div>
        <div class="slot open sunken">${icon("notepad")}</div>
      </div>
      <div class="tray">
        <svg width="8" height="10" viewBox="0 0 8 10"><path d="M1 4.500L4 1.500 7 4.500M1 8.500L4 5.500 7 8.500" fill="none" stroke="#000" stroke-width="1.300" /></svg>
        <svg width="17" height="16" viewBox="0 0 17 16">
          <path d="M5.500 3.500H15.500V11.500H5.500Z" fill="#9b9a97" stroke="#3e3e3e" /><path d="M6.500 4.500H14.500V10.500H6.500Z" fill="none" stroke="#f6f6f6" />
          <path d="M8 14H14M3.500 7V13.500H8" fill="none" stroke="#3e3e3e" stroke-width="1.400" />
          <path d="M1.500 1.500H5.500V6.500H1.500Z" fill="#fff" stroke="#3e3e3e" /><path d="M3.500 0V4" stroke="#3e3e3e" />
        </svg>
        <svg width="17" height="16" viewBox="0 0 17 16">
          <path d="M1 5.500H4L8.500 1.500V14.500L4 10.500H1Z" fill="#fff" stroke="#4c4c4c" />
          <path d="M10.500 5Q12.500 8 10.500 11M12.500 3.500Q15.500 8 12.500 12.500M14.300 2Q18 8 14.300 14" fill="none" stroke="#67645f" stroke-width="1" />
        </svg>
        <svg width="17" height="16" viewBox="0 0 17 16">
          <path d="M2.500 2.500Q5 1 8 2.800L9.500 4Q12 5 15.500 3.500 13.500 8 11 9.500L8.500 9Q6 7.500 2.500 9Z" fill="#fff" stroke="#4c4c4c" /><path d="M1.700 1V15" stroke="#4c4c4c" stroke-width="1.500" />
        </svg>
        <span class="clock">8:24 AM</span>
        ${icon("desktop")}
      </div>
    `;
  }
}

@customElement("app-root")
export class AppRoot extends LitElement {
  static styles = css`
    :host {
      position: relative;
      display: flex;
      flex-direction: column;
      width: 1280px;
      height: 720px;
      overflow: hidden;
      color: #000;
      font-family: "DejaVu Sans Condensed", "DejaVu Sans", sans-serif;
      font-size: 11px;
      font-stretch: condensed;
      letter-spacing: -0.15px;
      background: #525659;
    }

    .page {
      flex: 1;
    }

    win-notepad {
      position: absolute;
      top: 66px;
      left: 66px;
      width: 960px;
      height: 501px;
    }

    win-save-dialog {
      position: absolute;
      top: 108px;
      left: 70px;
      width: 640px;
      height: 479px;
    }

    .watermark {
      position: absolute;
      top: 606px;
      left: 1034px;
      overflow: visible;
      opacity: 0.5;
    }

    .watermark text {
      font-family: Roboto, sans-serif;
      font-size: 51px;
      font-weight: 400;
      letter-spacing: 0;
    }
  `;

  render(): TemplateResult {
    return html`
      <win-browser></win-browser>
      <div class="page"></div>
      <win-taskbar></win-taskbar>
      <win-notepad></win-notepad>
      <win-save-dialog></win-save-dialog>
      <svg class="watermark" width="230" height="74" viewBox="0 0 230 74">
        <g fill="#dfe1e3">
          <text x="4" y="53" textLength="64" lengthAdjust="spacingAndGlyphs">ANY</text>
          <text x="134" y="53" textLength="65" lengthAdjust="spacingAndGlyphs">RUN</text>
        </g>
        <g fill="none" stroke="#dfe1e3" stroke-width="3.600" stroke-linejoin="round">
          <path d="M88.500 47V7L128 30Q129 34 124 34" />
          <path d="M83 12Q78 10 78 14V59L117 37" />
          <path d="M92 20L128 41 89 63Q86 62 87 58" />
        </g>
      </svg>
    `;
  }
}
